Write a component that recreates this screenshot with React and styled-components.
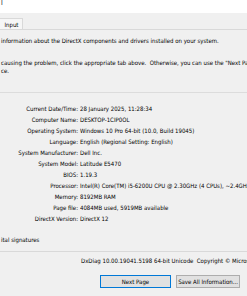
import React from "react";
import styled, { createGlobalStyle } from "styled-components";

const Global = createGlobalStyle`
  html, body { margin: 0; padding: 0; }
  body {
    background: #f0f0f0;
    font-family: "DejaVu Sans Condensed", "DejaVu Sans", sans-serif;
    font-stretch: condensed;
    font-size: 6px;
    color: #000;
    width: 247px;
    height: 296px;
    overflow: hidden;
  }
`;

const Window = styled.div`
  width: 247px;
  height: 296px;
  display: flex;
  flex-direction: column;
  overflow: hidden;
`;

const TitleBar = styled.div`
  height: 13px;
  background: #ffffff;
  line-height: 6px;
  padding-left: 1px;
  font-size: 7px;
  overflow: hidden;
  white-space: nowrap;
`;

const TabStrip = styled.div`
  height: 16px;
  display: flex;
  align-items: flex-end;
`;

const Tab = styled.div`
  width: 23px;
  height: 11px;
  box-sizing: border-box;
  border: 1px solid #d9d9d9;
  border-left: none;
  border-bottom: none;
  background: #f6f6f6;
  display: flex;
  align-items: center;
  justify-content: center;
  padding-left: 1px;
`;

const Page = styled.div`
  border-top: 1px solid #d9d9d9;
  border-bottom: 1px solid #d9d9d9;
  height: 223px;
  box-sizing: border-box;
  display: flex;
  flex-direction: column;
  overflow: hidden;
`;

const Line = styled.div`
  white-space: nowrap;
  line-height: 8px;
  padding-left: 1px;
  margin-top: ${(p) => p.$mt || 0}px;
`;

const Group = styled.div`
  margin-top: 17px;
  border-top: 1px solid #dcdcdc;
  padding-top: 10px;
`;

const InfoGrid = styled.div`
  display: grid;
  grid-template-columns: 78px 1fr;
  column-gap: 2px;
  line-height: 11px;
  white-space: nowrap;
`;

const Label = styled.div`
  text-align: right;
`;

const Value = styled.div`
  overflow: hidden;
`;

const Footer = styled.div`
  display: flex;
  flex-direction: column;
`;

const Version = styled.div`
  white-space: nowrap;
  line-height: 8px;
  margin-top: 5px;
  padding-left: 81px;
`;

const ButtonRow = styled.div`
  display: flex;
  gap: 5px;
  margin-top: 10px;
  padding-left: 100px;
`;

const Button = styled.div`
  box-sizing: border-box;
  height: 13px;
  width: ${(p) => p.$w}px;
  flex: none;
  background: #e1e1e1;
  border: 1px solid ${(p) => (p.$primary ? "#0078d7" : "#adadad")};
  display: flex;
  align-items: center;
  justify-content: center;
  white-space: nowrap;
`;

const rows = [
  ["Current Date/Time:", "28 January 2025, 11:28:34"],
  ["Computer Name:", "DESKTOP-1CIP0OL"],
  ["Operating System:", "Windows 10 Pro 64-bit (10.0, Build 19045)"],
  ["Language:", "English (Regional Setting: English)"],
  ["System Manufacturer:", "Dell Inc."],
  ["System Model:", "Latitude E5470"],
  ["BIOS:", "1.19.3"],
  ["Processor:", "Intel(R) Core(TM) i5-6200U CPU @ 2.30GHz (4 CPUs), ~2.4GHz"],
  ["Memory:", "8192MB RAM"],
  ["Page file:", "4084MB used, 5919MB available"],
  ["DirectX Version:", "DirectX 12"],
];

export default function App() {
  return (
    <>
      <Global />
      <Window>
        <TitleBar>l</TitleBar>
        <TabStrip>
          <Tab>Input</Tab>
        </TabStrip>
        <Page>
          <Line $mt={7}>
            information about the DirectX components and drivers installed on your system.
          </Line>
          <Line $mt={14}>
            causing the problem, click the appropriate tab above.&nbsp; Otherwise, you can use the "Next Page" button below to move through each page in sequence.
          </Line>
          <Line>ce.</Line>
          <Group>
            <InfoGrid>
              {rows.map(([l, v]) => (
                <React.Fragment key={l}>
                  <Label>{l}</Label>
                  <Value>{v}</Value>
                </React.Fragment>
              ))}
            </InfoGrid>
          </Group>
          <Line $mt={12}>ital signatures</Line>
        </Page>
        <Footer>
          <Version>DxDiag 10.00.19041.5198 64-bit Unicode&nbsp; Copyright © Microsoft. All rights reserved.</Version>
          <ButtonRow>
            <Button $primary $w={71}>Next Page</Button>
            <Button $w={64}>Save All Information...</Button>
          </ButtonRow>
        </Footer>
      </Window>
    </>
  );
}
